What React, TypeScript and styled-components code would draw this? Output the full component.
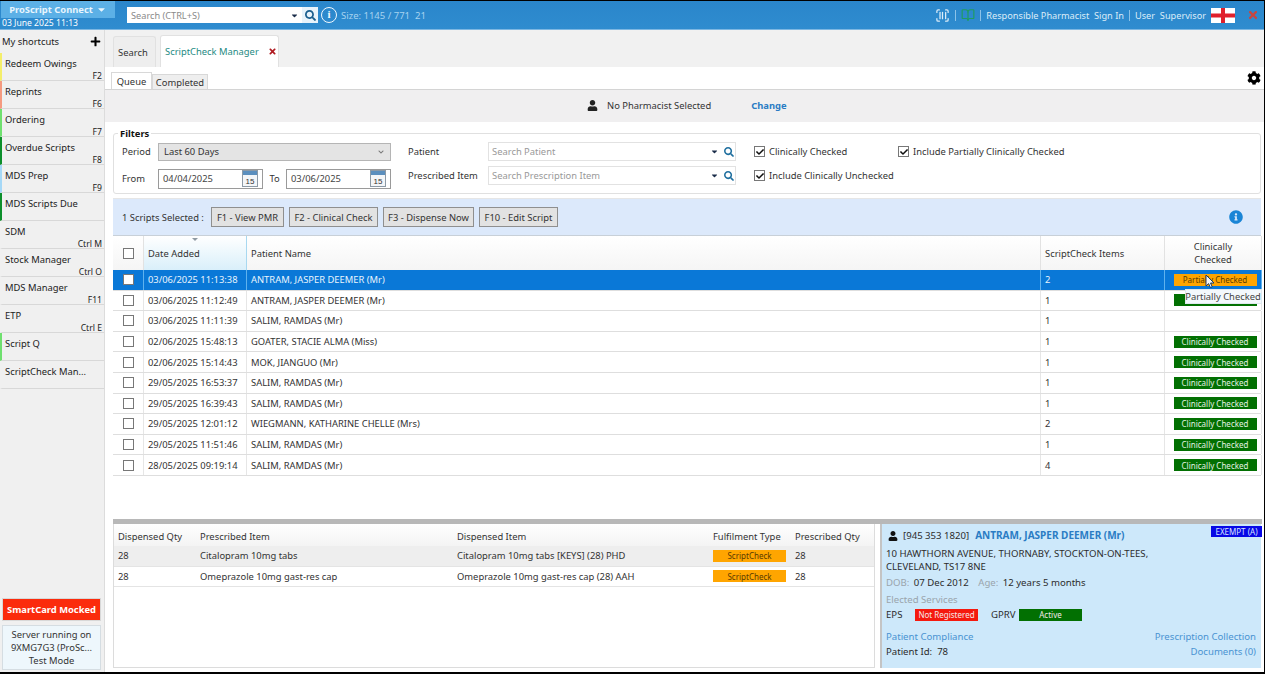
import styled, { createGlobalStyle } from 'styled-components';
import { FaCog, FaInfoCircle, FaPlus, FaSearch, FaTimes, FaUser, FaCaretDown, FaChevronDown, FaCheck } from 'react-icons/fa';
import { ScanBarcode, BookOpen } from 'lucide-react';

const shortcuts = [
  { name: 'Redeem Owings', key: 'F2', color: '#f4ee6a' },
  { name: 'Reprints', key: 'F6', color: '#f59a80' },
  { name: 'Ordering', key: 'F7', color: '#6fe06f' },
  { name: 'Overdue Scripts', key: 'F8', color: '#0d8f2b' },
  { name: 'MDS Prep', key: 'F9', color: '#a5d8f7' },
  { name: 'MDS Scripts Due', key: '', color: '#0d8f2b' },
  { name: 'SDM', key: 'Ctrl M', color: '#f0f0f0' },
  { name: 'Stock Manager', key: 'Ctrl O', color: '#f0f0f0' },
  { name: 'MDS Manager', key: 'F11', color: '#f0f0f0' },
  { name: 'ETP', key: 'Ctrl E', color: '#f0f0f0' },
  { name: 'Script Q', key: '', color: '#6fe06f' },
  { name: 'ScriptCheck Man...', key: '', color: '#f0f0f0' },
];

// second row's badge sits behind the tooltip, so its label can't be seen
const scripts = [
  { date: '03/06/2025 11:13:38', name: 'ANTRAM, JASPER DEEMER (Mr)', items: 2, status: 'partial' },
  { date: '03/06/2025 11:12:49', name: 'ANTRAM, JASPER DEEMER (Mr)', items: 1, status: 'covered' },
  { date: '03/06/2025 11:11:39', name: 'SALIM, RAMDAS (Mr)', items: 1, status: '' },
  { date: '02/06/2025 15:48:13', name: 'GOATER, STACIE ALMA (Miss)', items: 1, status: 'checked' },
  { date: '02/06/2025 15:14:43', name: 'MOK, JIANGUO (Mr)', items: 1, status: 'checked' },
  { date: '29/05/2025 16:53:37', name: 'SALIM, RAMDAS (Mr)', items: 1, status: 'checked' },
  { date: '29/05/2025 16:39:43', name: 'SALIM, RAMDAS (Mr)', items: 1, status: 'checked' },
  { date: '29/05/2025 12:01:12', name: 'WIEGMANN, KATHARINE CHELLE (Mrs)', items: 2, status: 'checked' },
  { date: '29/05/2025 11:51:46', name: 'SALIM, RAMDAS (Mr)', items: 1, status: 'checked' },
  { date: '28/05/2025 09:19:14', name: 'SALIM, RAMDAS (Mr)', items: 4, status: 'checked' },
];

const dispensed = [
  { qty: 28, item: 'Citalopram 10mg tabs', disp: 'Citalopram 10mg tabs [KEYS] (28) PHD' },
  { qty: 28, item: 'Omeprazole 10mg gast-res cap', disp: 'Omeprazole 10mg gast-res cap (28) AAH' },
];

function CalendarIcon() {
  return (
    <svg width="16" height="17" viewBox="0 0 16 17">
      <rect x="0.5" y="0.5" width="15" height="16" fill="#f4f6f8" stroke="#8d9aa6" />
      <rect x="1" y="1" width="14" height="4" fill="#5b8fbe" />
      <text x="8" y="14" fontSize="8" textAnchor="middle" fill="#333" fontFamily="Liberation Sans, sans-serif">15</text>
    </svg>
  );
}

function EnglandFlag() {
  return (
    <svg width="24" height="15" viewBox="0 0 24 15">
      <rect width="24" height="15" fill="#fff" />
      <rect x="10" width="4" height="15" fill="#e0202c" />
      <rect y="5.5" width="24" height="4" fill="#e0202c" />
    </svg>
  );
}

function Pointer() {
  return (
    <svg width="10" height="15" viewBox="0 0 10 15">
      <path d="M1 1 L1 12 L3.6 9.6 L5.4 13.6 L7.2 12.8 L5.5 9 L9 9 Z" fill="#f4f4f4" stroke="#1d3c66" strokeWidth="1" />
    </svg>
  );
}

export default function App() {
  return (
    <Shell>
      <GlobalStyle />
      <TopBar>
        <Brand>
          <BrandName>ProScript Connect <FaCaretDown size={11} /></BrandName>
          <BrandDate>03 June 2025 11:13</BrandDate>
        </Brand>
        <TopSearch>
          <span>Search (CTRL+S)</span>
          <FaCaretDown size={9} color="#1b2d4a" />
        </TopSearch>
        <TopSearchIcon><FaSearch size={11} /></TopSearchIcon>
        <InfoRing>i</InfoRing>
        <SizeText>Size: 1145 / 771&nbsp; 21</SizeText>
        <TopRight>
          <ScanBarcode size={15} color="#dcecf8" />
          <TopSep />
          <BookOpen size={14} color="#1f9c62" />
          <TopSep />
          <span>Responsible Pharmacist&nbsp; Sign In</span>
          <TopSep />
          <span>User&nbsp; Supervisor</span>
          <EnglandFlag />
          <CloseMark><FaTimes size={12} /></CloseMark>
        </TopRight>
      </TopBar>
      <Body>
        <Sidebar>
          <ShortcutHead>
            My shortcuts
            <FaPlus size={11} color="#000" />
          </ShortcutHead>
          {shortcuts.map((s) => (
            <Shortcut key={s.name} $color={s.color}>
              <span>{s.name}</span>
              <ShortcutKey>{s.key}</ShortcutKey>
            </Shortcut>
          ))}
          <SmartCard>SmartCard Mocked</SmartCard>
          <ServerBox>
            Server running on<br />9XMG7G3 (ProSc...<br />Test Mode
          </ServerBox>
        </Sidebar>
        <Main>
          <TabStrip>
            <Tab $width={43}>Search</Tab>
            <Tab $active $width={119}>
              ScriptCheck Manager
              <FaTimes size={9} color="#b01c22" />
            </Tab>
          </TabStrip>
          <TabBody>
            <SubTabs>
              <SubTab $active>Queue</SubTab>
              <SubTab>Completed</SubTab>
              <GearSlot><FaCog size={14} color="#000" /></GearSlot>
            </SubTabs>
            <PharmacistBar>
              <FaUser size={11} color="#222" />
              <span>No Pharmacist Selected</span>
              <ChangeLink>Change</ChangeLink>
            </PharmacistBar>
            <Filters>
              <FiltersTitle>Filters</FiltersTitle>
              <FilterGrid>
                <FilterLabel>Period</FilterLabel>
                <PeriodSelect>
                  Last 60 Days
                  <FaChevronDown size={6} color="#777" />
                </PeriodSelect>
                <FilterLabel>Patient</FilterLabel>
                <SearchField>
                  <span>Search Patient</span>
                  <FaCaretDown size={9} color="#1b2d4a" />
                  <FaSearch size={10} color="#1f6f9f" />
                </SearchField>
                <CheckLabel><CheckBox><FaCheck size={8} /></CheckBox>Clinically Checked</CheckLabel>
                <CheckLabel><CheckBox><FaCheck size={8} /></CheckBox>Include Partially Clinically Checked</CheckLabel>
                <FilterLabel>From</FilterLabel>
                <DateRange>
                  <DateField>04/04/2025<CalendarIcon /></DateField>
                  <span>To</span>
                  <DateField>03/06/2025<CalendarIcon /></DateField>
                </DateRange>
                <FilterLabel $raised>Prescribed Item</FilterLabel>
                <SearchField $raised>
                  <span>Search Prescription Item</span>
                  <FaCaretDown size={9} color="#1b2d4a" />
                  <FaSearch size={10} color="#1f6f9f" />
                </SearchField>
                <CheckLabel $raised><CheckBox><FaCheck size={8} /></CheckBox>Include Clinically Unchecked</CheckLabel>
              </FilterGrid>
            </Filters>
            <ActionBar>
              <SelectedText>1 Scripts Selected :</SelectedText>
              <ActionButton $width={73}>F1 - View PMR</ActionButton>
              <ActionButton $width={89}>F2 - Clinical Check</ActionButton>
              <ActionButton $width={91}>F3 - Dispense Now</ActionButton>
              <ActionButton $width={79}>F10 - Edit Script</ActionButton>
              <ActionInfo><FaInfoCircle size={14} color="#1a85d6" /></ActionInfo>
            </ActionBar>
            <ScriptTable>
              <ScriptHead>
                <HeadCell $center><CheckBox /></HeadCell>
                <HeadCell $sorted>Date Added</HeadCell>
                <HeadCell>Patient Name</HeadCell>
                <HeadCell>ScriptCheck Items</HeadCell>
                <HeadCell $center>Clinically<br />Checked</HeadCell>
              </ScriptHead>
              {scripts.map((r, i) => (
                <ScriptRow key={r.date} $selected={i === 0}>
                  <RowCell $center $selected={i === 0}><CheckBox /></RowCell>
                  <RowCell $selected={i === 0}>{r.date}</RowCell>
                  <RowCell $selected={i === 0}>{r.name}</RowCell>
                  <RowCell $selected={i === 0}>{r.items}</RowCell>
                  <RowCell $center $selected={i === 0}>
                    {r.status === 'partial' && (
                      <StatusBadge $partial>
                        Partially Checked
                        <PointerSlot><Pointer /></PointerSlot>
                        <Tooltip>Partially Checked</Tooltip>
                      </StatusBadge>
                    )}
                    {r.status === 'covered' && <StatusBadge />}
                    {r.status === 'checked' && <StatusBadge>Clinically Checked</StatusBadge>}
                  </RowCell>
                </ScriptRow>
              ))}
            </ScriptTable>
            <Splitter />
            <Lower>
              <ItemTable>
                <ItemHead>
                  <span>Dispensed Qty</span>
                  <span>Prescribed Item</span>
                  <span>Dispensed Item</span>
                  <span>Fulfilment Type</span>
                  <span>Prescribed Qty</span>
                </ItemHead>
                {dispensed.map((d, i) => (
                  <ItemRow key={d.item} $shaded={i === 0}>
                    <span>{d.qty}</span>
                    <span>{d.item}</span>
                    <span>{d.disp}</span>
                    <FulfilBadge>ScriptCheck</FulfilBadge>
                    <span>{d.qty}</span>
                  </ItemRow>
                ))}
              </ItemTable>
              <PatientPanel>
                <Exempt>EXEMPT (A)</Exempt>
                <PatientTitle>
                  <FaUser size={10} color="#111" />
                  <span>[945 353 1820]</span>
                  <PatientName>ANTRAM, JASPER DEEMER (Mr)</PatientName>
                </PatientTitle>
                <Address>10 HAWTHORN AVENUE, THORNABY, STOCKTON-ON-TEES,<br />CLEVELAND, TS17 8NE</Address>
                <DobLine>
                  <DobLabel>DOB:</DobLabel> 07 Dec 2012 <AgeLabel>Age:</AgeLabel> 12 years 5 months
                </DobLine>
                <Muted>Elected Services</Muted>
                <ServiceRow>
                  <ServiceName>EPS</ServiceName>
                  <ServiceBadge $bg="#f5190e" $width={63}>Not Registered</ServiceBadge>
                  <ServiceName $gap>GPRV</ServiceName>
                  <ServiceBadge $bg="#027002" $width={63}>Active</ServiceBadge>
                </ServiceRow>
                <PanelFoot>
                  <PanelLink>Patient Compliance</PanelLink>
                  <PanelLink>Prescription Collection</PanelLink>
                  <span>Patient Id:&nbsp; 78</span>
                  <PanelLink>Documents (0)</PanelLink>
                </PanelFoot>
              </PatientPanel>
            </Lower>
          </TabBody>
        </Main>
      </Body>
    </Shell>
  );
}

const GlobalStyle = createGlobalStyle`
  html, body {
    margin: 0;
    padding: 0;
    background: #000;
  }
  body {
    font-family: "Noto Sans", "Open Sans", sans-serif;
    font-size: 9.4px;
    color: #333;
  }
  * {
    box-sizing: border-box;
  }
`;

const Shell = styled.div`
  width: 1264px;
  height: 671px;
  margin-top: 1px;
  display: flex;
  flex-direction: column;
  overflow: hidden;
  background: #fff;
`;

const TopBar = styled.div`
  height: 29px;
  flex: none;
  display: flex;
  align-items: center;
  background: linear-gradient(#2a86cb, #2f8ccf);
  color: #e3f1fb;
  border-bottom: 1px solid #7db7e2;
`;

const Brand = styled.div`
  width: 114px;
  height: 28px;
  align-self: flex-start;
  flex: none;
  display: flex;
  flex-direction: column;
  margin-left: 1px;
`;

const BrandName = styled.div`
  height: 17px;
  display: flex;
  align-items: center;
  justify-content: center;
  gap: 3px;
  background: #5cb0e6;
  color: #e8f5fd;
  font-weight: 700;
`;

const BrandDate = styled.div`
  font-size: 8.6px;
  padding-left: 1px;
  color: #fff;
  line-height: 11px;
  white-space: nowrap;
`;

const TopSearch = styled.div`
  width: 175px;
  height: 16px;
  margin-left: 12px;
  background: #fff;
  color: #8a8a8a;
  font-size: 9.2px;
  padding: 0 3px 0 4px;
  display: flex;
  align-items: center;
  justify-content: space-between;
`;

const TopSearchIcon = styled.div`
  width: 16px;
  height: 16px;
  background: #e8f3fb;
  color: #1b5f8f;
  display: flex;
  align-items: center;
  justify-content: center;
`;

const InfoRing = styled.div`
  width: 16px;
  height: 16px;
  margin-left: 3px;
  border: 1.5px solid #f0f8fe;
  border-radius: 50%;
  color: #f0f8fe;
  font: 700 11px/13px "Liberation Serif", serif;
  text-align: center;
`;

const SizeText = styled.div`
  margin-left: 4px;
  color: #a6d3f0;
  font-size: 9.5px;
  white-space: nowrap;
`;

const TopRight = styled.div`
  margin-left: auto;
  display: flex;
  align-items: center;
  gap: 5px;
  padding-right: 5px;
  font-size: 9.2px;
  color: #dcecf8;
  white-space: nowrap;
`;

const TopSep = styled.div`
  width: 1px;
  height: 11px;
  background: #8cc2e8;
`;

const CloseMark = styled.div`
  margin-left: 7px;
  display: flex;
  color: #c9453f;
`;

const Body = styled.div`
  flex: 1;
  min-height: 0;
  display: flex;
`;

const Sidebar = styled.div`
  width: 105px;
  flex: none;
  display: flex;
  flex-direction: column;
  background: #f0f0f0;
  border-right: 1px solid #dcdcdc;
`;

const ShortcutHead = styled.div`
  height: 23px;
  flex: none;
  display: flex;
  align-items: center;
  justify-content: space-between;
  padding: 0 3px 0 2px;
  color: #222;
`;

const Shortcut = styled.div<{ $color: string }>`
  height: 28px;
  flex: none;
  display: flex;
  flex-direction: column;
  padding: 4px 2px 0 3px;
  border-left: 2px solid ${(p) => p.$color};
  border-bottom: 1px solid #d8d8d8;
  color: #222;
  line-height: 13px;
  white-space: nowrap;
`;

const ShortcutKey = styled.span`
  align-self: flex-end;
  margin-top: 1px;
  font-size: 8.6px;
  line-height: 10px;
`;

const SmartCard = styled.div`
  margin: auto 3px 0 2px;
  height: 23px;
  flex: none;
  background: #fb2b0c;
  border: 1px solid #d8d8d8;
  color: #fff;
  font-weight: 700;
  display: flex;
  align-items: center;
  justify-content: center;
`;

const ServerBox = styled.div`
  margin: 4px 3px 2px 2px;
  height: 45px;
  flex: none;
  background: #eef7fc;
  border: 1px solid #d5dde2;
  color: #333;
  text-align: center;
  line-height: 13px;
  padding-top: 2px;
  white-space: nowrap;
  overflow: hidden;
`;

const Main = styled.div`
  flex: 1;
  min-width: 0;
  display: flex;
  flex-direction: column;
  background: #f1f1f1;
`;

const TabStrip = styled.div`
  height: 37px;
  flex: none;
  display: flex;
  align-items: flex-end;
  gap: 4px;
  padding-left: 8px;
`;

const Tab = styled.div<{ $active?: boolean; $width: number }>`
  width: ${(p) => p.$width}px;
  height: ${(p) => (p.$active ? '32px' : '31px')};
  display: flex;
  align-items: center;
  gap: 9px;
  padding-left: 4px;
  background: ${(p) => (p.$active ? '#fff' : '#eeeeee')};
  color: ${(p) => (p.$active ? '#258a83' : '#333')};
  border: 1px solid #e1e1e1;
  border-bottom: none;
  border-radius: 3px 3px 0 0;
  white-space: nowrap;
`;

const TabBody = styled.div`
  flex: 1;
  min-height: 0;
  display: flex;
  flex-direction: column;
  background: #fff;
  padding: 0 1px 4px 5px;
`;

const SubTabs = styled.div`
  height: 22px;
  flex: none;
  margin-left: 1px;
  display: flex;
  align-items: flex-end;
`;

const SubTab = styled.div<{ $active?: boolean }>`
  height: ${(p) => (p.$active ? '17px' : '15px')};
  width: ${(p) => (p.$active ? '41px' : '56px')};
  display: flex;
  align-items: center;
  justify-content: center;
  background: ${(p) => (p.$active ? '#fff' : '#eeeeee')};
  border: 1px solid #d8d8d8;
  border-bottom: none;
`;

const GearSlot = styled.div`
  margin-left: auto;
  align-self: center;
  display: flex;
  padding-right: 2px;
`;

const PharmacistBar = styled.div`
  height: 33px;
  flex: none;
  margin-left: -5px;
  margin-right: -1px;
  display: flex;
  align-items: center;
  padding: 0 0 2px 482px;
  gap: 9px;
  background: #f0eff0;
  border-top: 1px solid #d4d4d4;
  color: #333;
`;

const ChangeLink = styled.span`
  margin-left: 31px;
  color: #2a7cc4;
  font-weight: 700;
`;

const Filters = styled.div`
  position: relative;
  height: 61px;
  flex: none;
  margin: 11px 2px 0 3px;
  border: 1px solid #e0e0e0;
  border-radius: 3px;
  padding: 8px 0 0 8px;
`;

const FiltersTitle = styled.div`
  position: absolute;
  left: 4px;
  top: -7px;
  padding: 0 2px;
  background: #fff;
  color: #111;
  font-weight: 700;
  line-height: 13px;
`;

const FilterGrid = styled.div`
  display: grid;
  grid-template-columns: 36px 250px 80px 266px 144px auto;
  grid-template-rows: 19px 21px;
  row-gap: 7px;
  align-items: center;
`;

const FilterLabel = styled.span<{ $raised?: boolean }>`
  white-space: nowrap;
  margin-bottom: ${(p) => (p.$raised ? '6px' : '0')};
`;

const PeriodSelect = styled.div`
  height: 18px;
  width: 233px;
  display: flex;
  align-items: center;
  justify-content: space-between;
  padding: 0 6px 0 5px;
  background: #e4e4e4;
  border: 1px solid #b5b5b5;
`;

const SearchField = styled.div<{ $raised?: boolean }>`
  height: 19px;
  width: 248px;
  margin-bottom: ${(p) => (p.$raised ? '6px' : '0')};
  display: flex;
  align-items: center;
  gap: 5px;
  padding: 0 1px 0 3px;
  border: 1px solid #e2e2e2;
  color: #999;

  & > span {
    flex: 1;
  }
`;

const CheckLabel = styled.label<{ $raised?: boolean }>`
  display: flex;
  align-items: center;
  gap: 4px;
  margin-bottom: ${(p) => (p.$raised ? '6px' : '0')};
  white-space: nowrap;
`;

const CheckBox = styled.span`
  width: 11px;
  height: 11px;
  flex: none;
  display: inline-flex;
  align-items: center;
  justify-content: center;
  background: #fff;
  border: 1px solid #777;
  color: #111;
`;

const DateRange = styled.div`
  width: 233px;
  display: flex;
  align-items: center;
  justify-content: space-between;
`;

const DateField = styled.div`
  width: 105px;
  height: 20px;
  display: flex;
  align-items: center;
  justify-content: space-between;
  padding: 0 4px;
  border: 1px solid #9a9a9a;
  color: #444;
`;

const ActionBar = styled.div`
  height: 37px;
  flex: none;
  margin: 4px 2px 0 3px;
  display: flex;
  align-items: center;
  gap: 5px;
  padding-left: 9px;
  background: #dce9fb;
  border-top: 1px solid #e6e6e6;
`;

const SelectedText = styled.span`
  width: 84px;
  white-space: nowrap;
`;

const ActionButton = styled.div<{ $width: number }>`
  width: ${(p) => p.$width}px;
  height: 20px;
  display: flex;
  align-items: center;
  justify-content: center;
  background: #e2e2e2;
  border: 1px solid #8f8f8f;
  color: #333;
  white-space: nowrap;
`;

const ActionInfo = styled.div`
  margin-left: auto;
  padding-right: 18px;
  display: flex;
`;

const scriptColumns = '31px 103px 794px 124px 97px';

const ScriptTable = styled.div`
  flex: 1;
  min-height: 0;
  margin: 0 2px 0 3px;
  border-top: 1px solid #c8d0d8;
`;

const ScriptHead = styled.div`
  height: 34px;
  display: grid;
  grid-template-columns: ${scriptColumns};
`;

const HeadCell = styled.div<{ $center?: boolean; $sorted?: boolean }>`
  position: relative;
  display: flex;
  align-items: center;
  justify-content: ${(p) => (p.$center ? 'center' : 'flex-start')};
  text-align: ${(p) => (p.$center ? 'center' : 'left')};
  line-height: 13px;
  padding-left: ${(p) => (p.$center ? '0' : '4px')};
  color: #333;
  background: ${(p) => (p.$sorted ? 'linear-gradient(#fff, #d9effa)' : 'linear-gradient(#fff, #f5f5f5)')};
  border-right: 1px solid ${(p) => (p.$sorted ? '#a8d8f0' : '#e2e2e2')};

  &::after {
    content: '';
    display: ${(p) => (p.$sorted ? 'block' : 'none')};
    position: absolute;
    top: 2px;
    left: 48px;
    border: 3px solid transparent;
    border-top-color: #8f9aa3;
  }
`;

const ScriptRow = styled.div<{ $selected?: boolean }>`
  height: 20.6px;
  display: grid;
  grid-template-columns: ${scriptColumns};
  background: ${(p) => (p.$selected ? '#0a78d7' : '#fff')};
  color: ${(p) => (p.$selected ? '#e8f4fd' : '#333')};
  border-bottom: 1px solid #dedede;
`;

const RowCell = styled.div<{ $center?: boolean; $selected?: boolean }>`
  display: flex;
  align-items: center;
  justify-content: ${(p) => (p.$center ? 'center' : 'flex-start')};
  padding-left: ${(p) => (p.$center ? '0' : '4px')};
  border-right: 1px solid ${(p) => (p.$selected ? '#5fb2ee' : '#e6e6e6')};
  white-space: nowrap;
`;

const StatusBadge = styled.div<{ $partial?: boolean }>`
  position: relative;
  width: 83px;
  height: 12px;
  margin-left: 4px;
  display: flex;
  align-items: center;
  justify-content: center;
  font-size: 8px;
  background: ${(p) => (p.$partial ? '#ffa500' : '#027002')};
  color: ${(p) => (p.$partial ? '#5a3a00' : '#e2f2e2')};
  white-space: nowrap;
`;

const PointerSlot = styled.div`
  position: absolute;
  left: 31px;
  top: 0;
  display: flex;
`;

const Tooltip = styled.div`
  position: absolute;
  left: 11px;
  top: 15px;
  width: 77px;
  height: 15px;
  display: flex;
  align-items: center;
  justify-content: center;
  background: #f3f8fc;
  border: 1px solid #dfe8ee;
  color: #444;
  font-size: 9.4px;
  z-index: 2;
`;

const Splitter = styled.div`
  height: 5px;
  flex: none;
  background: #b8b8b8;
  margin: 0 1px 0 3px;
`;

const Lower = styled.div`
  height: 144px;
  flex: none;
  display: flex;
  margin: 0 2px 0 3px;
  gap: 5px;
`;

const itemColumns = '82px 257px 256px 82px 84px';

const ItemTable = styled.div`
  width: 762px;
  flex: none;
  border: 1px solid #dcdcdc;
  border-top: none;
`;

const ItemHead = styled.div`
  height: 22px;
  padding-top: 2px;
  display: grid;
  grid-template-columns: ${itemColumns};
  align-items: center;
  background: linear-gradient(#fff, #f4f4f4);
  color: #333;

  & > span {
    padding-left: 4px;
    white-space: nowrap;
  }
`;

const ItemRow = styled.div<{ $shaded?: boolean }>`
  height: 20.5px;
  display: grid;
  grid-template-columns: ${itemColumns};
  align-items: center;
  background: ${(p) => (p.$shaded ? '#eeeeee' : '#fff')};
  border-bottom: 1px solid #e4e4e4;

  & > span {
    padding-left: 4px;
    white-space: nowrap;
  }
`;

const FulfilBadge = styled.div`
  width: 73px;
  height: 12px;
  margin-left: 4px;
  display: flex;
  align-items: center;
  justify-content: center;
  background: #ffa500;
  color: #5a3a00;
  font-size: 8px;
`;

const PatientPanel = styled.div`
  position: relative;
  flex: 1;
  min-width: 0;
  display: flex;
  flex-direction: column;
  padding: 4px 5px 0 4px;
  background: #cde8fa;
  border-left: 2px solid #c4c4c4;
  color: #2c2c2c;
  font-size: 9.6px;
  line-height: 13px;
`;

const Exempt = styled.div`
  position: absolute;
  right: -1px;
  top: 2px;
  width: 51px;
  height: 11px;
  display: flex;
  align-items: center;
  justify-content: center;
  background: #0808e6;
  color: #d8e4ff;
  font-size: 8px;
`;

const PatientTitle = styled.div`
  height: 15px;
  display: flex;
  align-items: center;
  gap: 5px;
  padding-left: 2px;
`;

const PatientName = styled.span`
  margin-left: 1px;
  color: #2a7cc4;
  font-size: 10px;
  font-weight: 700;
`;

const Address = styled.div`
  margin-top: 4px;
`;

const DobLine = styled.div`
  margin-top: 3px;
  margin-bottom: 4px;
`;

const Muted = styled.span`
  color: #9aa4ac;
`;

const DobLabel = styled(Muted)`
  margin-right: 2px;
`;

const AgeLabel = styled(Muted)`
  margin: 0 2px 0 7px;
`;

const ServiceRow = styled.div`
  height: 13px;
  margin-top: 2px;
  display: flex;
  align-items: center;
`;

const ServiceName = styled.span<{ $gap?: boolean }>`
  width: ${(p) => (p.$gap ? '28px' : '29px')};
  margin-left: ${(p) => (p.$gap ? '13px' : '0')};
`;

const ServiceBadge = styled.div<{ $bg: string; $width: number }>`
  width: ${(p) => p.$width}px;
  height: 12px;
  display: flex;
  align-items: center;
  justify-content: center;
  background: ${(p) => p.$bg};
  color: #f4e8e8;
  font-size: 8px;
`;

const PanelFoot = styled.div`
  margin-top: 9px;
  display: grid;
  grid-template-columns: 1fr auto;
  row-gap: 2px;

  & > *:nth-child(even) {
    justify-self: end;
  }
`;

const PanelLink = styled.span`
  color: #4a93d2;
`;
